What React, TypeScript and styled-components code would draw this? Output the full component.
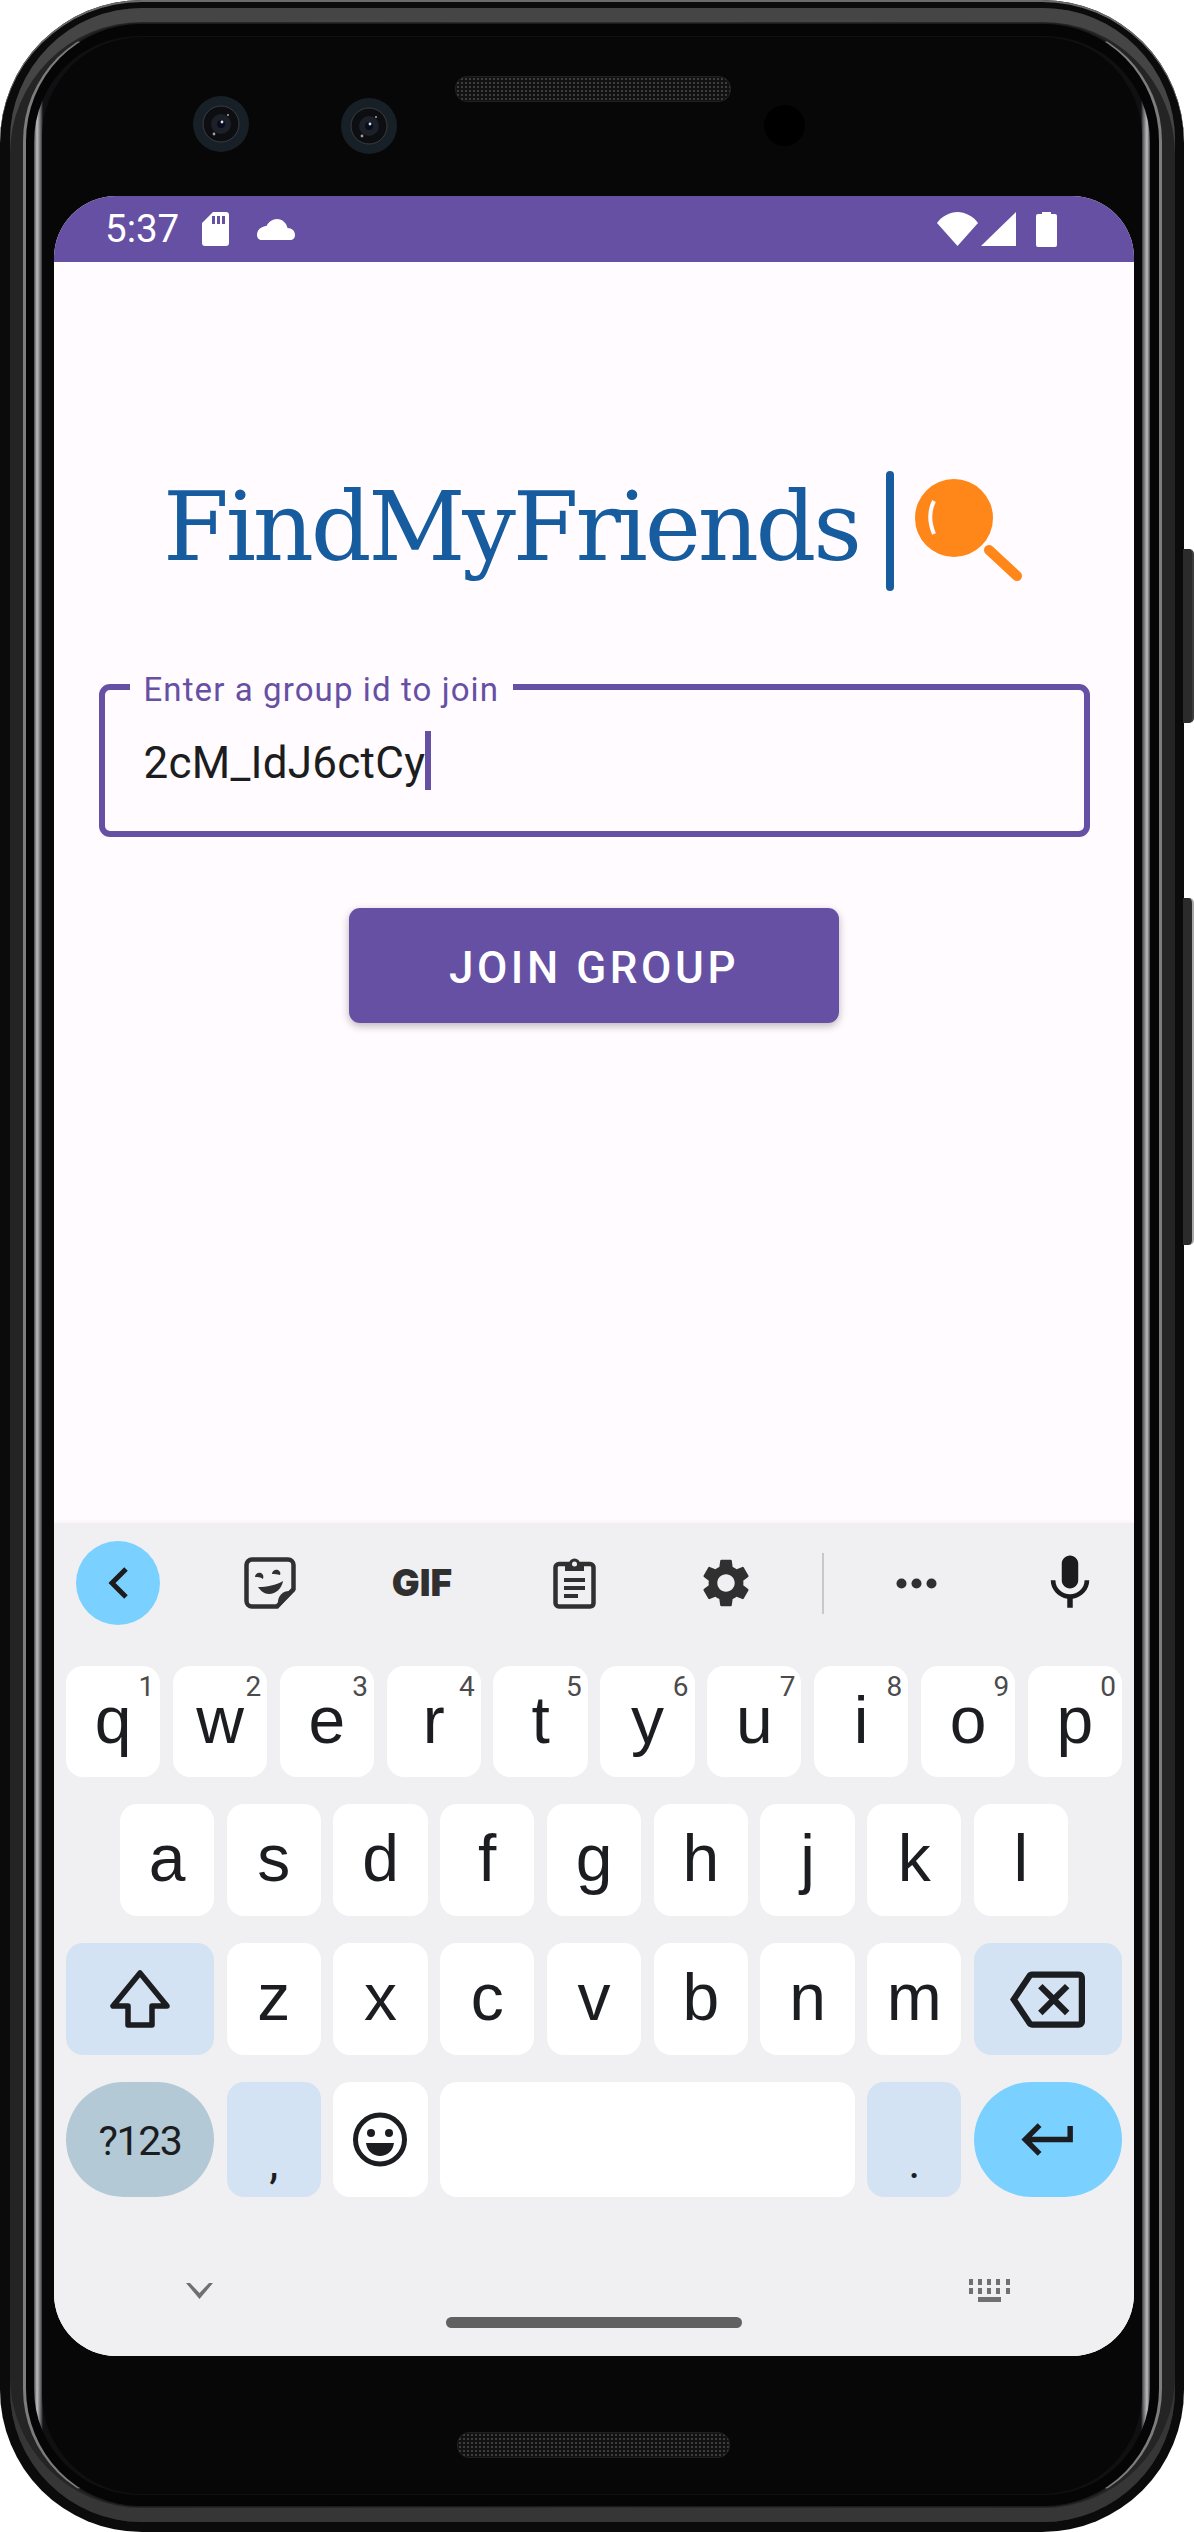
import React from 'react';
import styled, { createGlobalStyle } from 'styled-components';
import { MdKeyboardReturn, MdMic, MdOutlineBackspace, MdSettings } from 'react-icons/md';

const purple = '#6650a4';
const ink = '#1b1d20';
const logoBlue = '#175c9f';

const GlobalStyle = createGlobalStyle`
  html, body {
    margin: 0;
    background: #ffffff;
  }
  * {
    box-sizing: border-box;
  }
`;

const Device = styled.div`
  position: relative;
  width: 1194px;
  height: 2532px;
  font-family: Roboto, 'Liberation Sans', sans-serif;
`;

const SideButton = styled.div<{ $top: number; $height: number; $edge: string }>`
  position: absolute;
  top: ${(p) => p.$top}px;
  right: 0;
  width: 11px;
  height: ${(p) => p.$height}px;
  background: #2b2b2b;
  border-right: 2px solid ${(p) => p.$edge};
  border-radius: 0 5px 5px 0;
`;

const Shell = styled.div`
  width: 1184px;
  height: 100%;
  padding: 8px 9px 10px 10px;
  background: #0b0b0b;
  border-radius: 142px;
  box-shadow: inset 0 2px 0 #6a6a6a;
`;

const Band = styled.div`
  height: 100%;
  padding: 15px 13px;
  background: linear-gradient(90deg, #242424, #2c2c2c 50%, #242424);
  border-radius: 132px;
  box-shadow: inset 0 14px 0 #454545, inset 0 -14px 0 #363636;
`;

const Rim = styled.div`
  height: 100%;
  padding: 12px 9px 11px 8px;
  background: #050505;
  border: 3px solid #7d7d80;
  border-top: 1px solid #1b1b1d;
  border-bottom: 1px solid #1b1b1d;
  border-radius: 118px;
`;

const Glass = styled.div`
  height: 100%;
  padding: 1px 8px;
  background: linear-gradient(
    90deg,
    #48484a 0,
    #bdbdc0 3px,
    #5b5b5e 7px,
    #101012 9px,
    #101012 calc(100% - 9px),
    #5b5b5e calc(100% - 7px),
    #bdbdc0 calc(100% - 3px),
    #48484a 100%
  );
  border-radius: 106px;
`;

const Bezel = styled.div`
  height: 100%;
  padding: 0 8px 0 12px;
  background: #070707;
  border-radius: 100px;
  overflow: hidden;
`;

const TopBezel = styled.div`
  display: flex;
  align-items: flex-start;
  height: 159px;
  padding-left: 139px;
`;

const Lens = styled.svg<{ $top: number; $left: number }>`
  flex: none;
  margin: ${(p) => p.$top}px 0 0 ${(p) => p.$left}px;
`;

const Speaker = styled.div<{ $top: number; $left: number; $width: number }>`
  flex: none;
  width: ${(p) => p.$width}px;
  height: 26px;
  margin: ${(p) => p.$top}px 0 0 ${(p) => p.$left}px;
  background: radial-gradient(circle, #3d3d3d 1px, transparent 1.5px) 0 0 / 4px 4px, #121212;
  border: 1px solid #202020;
  border-radius: 12px;
`;

const Sensor = styled.div`
  flex: none;
  width: 41px;
  height: 41px;
  margin: 68px 0 0 33px;
  background: #000000;
  border-radius: 50%;
`;

const Screen = styled.div`
  display: flex;
  flex-direction: column;
  width: 1080px;
  height: 2160px;
  background: #fffbfe;
  border-radius: 62px;
  overflow: hidden;
`;

const StatusBar = styled.div`
  flex: none;
  display: flex;
  align-items: center;
  height: 66px;
  padding: 0 77px 0 51px;
  background: ${purple};
  color: #ffffff;
`;

const Time = styled.span`
  width: 72px;
  margin-right: 25px;
  font-size: 38.5px;
  line-height: 44px;
`;

const StatusIcon = styled.svg<{ $gap?: number }>`
  flex: none;
  margin-right: ${(p) => p.$gap ?? 0}px;
  fill: #ffffff;
`;

const StatusSpacer = styled.div`
  flex: 1;
`;

const Content = styled.main`
  flex: 1;
  display: flex;
  flex-direction: column;
`;

const LogoRow = styled.div`
  display: flex;
  align-items: center;
  height: 120px;
  margin-top: 209px;
  padding-left: 109px;
`;

const LogoText = styled.div`
  width: 723px;
  margin-top: -9px;
  font-family: 'DejaVu Serif', 'Liberation Serif', serif;
  font-size: 95px;
  line-height: 120px;
  letter-spacing: -3.25px;
  color: ${logoBlue};
  white-space: nowrap;
`;

const LogoBar = styled.div`
  flex: none;
  width: 8px;
  height: 120px;
  background: ${logoBlue};
  border-radius: 4px;
`;

const LogoGlass = styled.svg`
  flex: none;
  margin-left: 21px;
`;

const Field = styled.div`
  position: relative;
  display: flex;
  align-items: flex-start;
  height: 153px;
  margin: 93px 44px 0 44.5px;
  padding: 41px 39px 0;
  border: 6px solid ${purple};
  border-radius: 11px;
`;

const FieldLabel = styled.label`
  position: absolute;
  top: -20px;
  left: 25px;
  padding: 0 14px;
  background: #fffbfe;
  color: ${purple};
  font-size: 33px;
  line-height: 40px;
  letter-spacing: 1.1px;
`;

const FieldValue = styled.span`
  margin-top: 6px;
  color: ${ink};
  font-size: 44px;
  line-height: 52px;
  letter-spacing: 0.25px;
`;

const Caret = styled.span`
  flex: none;
  width: 5.5px;
  height: 59px;
  background: ${purple};
`;

const JoinButton = styled.button`
  align-self: center;
  width: 490px;
  height: 115px;
  margin-top: 71px;
  padding: 4px 0 0;
  background: ${purple};
  border: 0;
  border-radius: 11px;
  box-shadow: 0 3px 8px rgba(0, 0, 0, 0.28);
  color: #ffffff;
  font-family: Roboto, sans-serif;
  font-size: 44px;
  font-weight: 500;
  letter-spacing: 3.6px;
`;

const Keyboard = styled.section`
  flex: none;
  height: 833px;
  padding: 0 12px;
  background: #f0f0f2;
  box-shadow: 0 -2px 3px rgba(0, 0, 0, 0.03);
`;

const Toolbar = styled.div`
  display: flex;
  align-items: center;
  height: 120px;
  margin: 0 -12px 23px;
  padding-left: 22px;
`;

const BackButton = styled.div`
  flex: none;
  display: flex;
  align-items: center;
  justify-content: center;
  width: 84px;
  height: 84px;
  margin-right: 34px;
  background: #7ad0ff;
  border-radius: 50%;
`;

const ToolSlot = styled.div<{ $width: number }>`
  flex: none;
  display: flex;
  align-items: center;
  justify-content: center;
  width: ${(p) => p.$width}px;
  color: #303030;
`;

const GifLabel = styled.span`
  font-family: Inter, 'DejaVu Sans', sans-serif;
  font-size: 37px;
  font-weight: 900;
  line-height: 40px;
  color: #303030;
`;

const ToolDivider = styled.div`
  flex: none;
  width: 2px;
  height: 61px;
  margin-left: 20px;
  background: #c8c8cc;
`;

const KeyRows = styled.div`
  display: flex;
  flex-direction: column;
  gap: 27px;
`;

const KeyRow = styled.div<{ $height: number; $inset?: number }>`
  display: flex;
  gap: 12.6px;
  height: ${(p) => p.$height}px;
  padding: 0 ${(p) => p.$inset ?? 0}px;
`;

const Key = styled.div<{ $width?: number; $bg?: string; $pill?: boolean; $low?: boolean; $icon?: boolean }>`
  position: relative;
  flex: ${(p) => (p.$width ? `0 0 ${p.$width}px` : '1')};
  display: flex;
  align-items: ${(p) => (p.$low ? 'flex-end' : 'center')};
  justify-content: center;
  padding-bottom: ${(p) => (p.$low ? 12 : p.$icon ? 0 : 4)}px;
  background: ${(p) => p.$bg ?? '#ffffff'};
  border-radius: ${(p) => (p.$pill ? '58px' : '17px')};
  color: ${ink};
  font-family: 'Liberation Sans', Roboto, sans-serif;
  font-size: 66px;
  line-height: 76px;
`;

const Hint = styled.sup`
  position: absolute;
  top: 7px;
  right: 6px;
  color: #4b4b4d;
  font-family: Roboto, sans-serif;
  font-size: 28px;
  line-height: 28px;
`;

const ModeLabel = styled.span`
  margin-top: 2px;
  font-family: Roboto, sans-serif;
  font-size: 41px;
  letter-spacing: -1.4px;
  line-height: 48px;
`;

const Punct = styled.span`
  font-family: Roboto, sans-serif;
  font-size: 46px;
  line-height: 46px;
`;

const NavRow = styled.div`
  display: flex;
  align-items: center;
  justify-content: space-between;
  height: 23px;
  margin-top: 82px;
  padding: 0 112px 0 120px;
`;

const NavIcon = styled.svg`
  flex: none;
  fill: #707070;
`;

const HomeBar = styled.div`
  width: 296px;
  height: 11px;
  margin: 15px auto 0;
  background: #616161;
  border-radius: 6px;
`;

const CameraLens = ({ top, left }: { top: number; left: number }) => (
  <Lens $top={top} $left={left} width="56" height="56" viewBox="0 0 56 56">
    <circle cx="28" cy="28" r="28" fill="#182027" />
    <circle cx="28" cy="28" r="18" fill="#0d0e12" stroke="#3a3c40" strokeWidth="1" />
    <circle cx="28" cy="28" r="10" fill="#1c2029" />
    <circle cx="28" cy="28" r="4" fill="#0a0c1c" />
    <circle cx="29" cy="26" r="1.4" fill="#d8e4f0" />
    <circle cx="35" cy="19" r="1" fill="#b8a89c" />
    <circle cx="21" cy="38" r="1.4" fill="#a89c98" />
  </Lens>
);

const row1 = [
  ['q', '1'],
  ['w', '2'],
  ['e', '3'],
  ['r', '4'],
  ['t', '5'],
  ['y', '6'],
  ['u', '7'],
  ['i', '8'],
  ['o', '9'],
  ['p', '0'],
];
const row2 = ['a', 's', 'd', 'f', 'g', 'h', 'j', 'k', 'l'];
const row3 = ['z', 'x', 'c', 'v', 'b', 'n', 'm'];
const keyWidth = 94.2;
const wideKey = 148;
const lightBlue = '#d3e3f3';

export default function App() {
  return (
    <>
      <GlobalStyle />
      <Device>
        <SideButton $top={549} $height={174} $edge="#3c3c3c" />
        <SideButton $top={898} $height={347} $edge="#a8a8a8" />
        <Shell>
          <Band>
            <Rim>
              <Glass>
                <Bezel>
                  <TopBezel>
                    <CameraLens top={59} left={0} />
                    <CameraLens top={61} left={92} />
                    <Speaker $top={39} $left={58} $width={276} />
                    <Sensor />
                  </TopBezel>
                  <Screen>
                    <StatusBar>
                      <Time>5:37</Time>
                      <StatusIcon $gap={28} width="27" height="34" viewBox="0 0 27 34">
                        <path d="M11 0h13a3 3 0 0 1 3 3v28a3 3 0 0 1-3 3H3a3 3 0 0 1-3-3V11zM10 4v8h3V4zm5 0v8h3V4zm5 0v8h3V4z" fillRule="evenodd" />
                      </StatusIcon>
                      <StatusIcon width="38" height="21" viewBox="0 0 38 21">
                        <path d="M30.5 9C29.5 4 25.5 0 20 0c-4.500 0-8.500 3-10.500 7C4 7.500 0 11 0 16c0 3 2 5 5 5h28c3 0 5-2 5-5 0-4-3-7-7.500-7z" />
                      </StatusIcon>
                      <StatusSpacer />
                      <StatusIcon $gap={3} width="41" height="34" viewBox="0 0 41 34">
                        <path d="M0 11C5 4 13 0 20.500 0S36 4 41 11L20.500 34z" />
                      </StatusIcon>
                      <StatusIcon $gap={20} width="35" height="34" viewBox="0 0 35 34">
                        <path d="M35 0v34H0z" />
                      </StatusIcon>
                      <StatusIcon width="21" height="35" viewBox="0 0 21 35">
                        <path d="M6 0h9v2h4a2 2 0 0 1 2 2v29a2 2 0 0 1-2 2H2a2 2 0 0 1-2-2V4a2 2 0 0 1 2-2h4z" />
                      </StatusIcon>
                    </StatusBar>
                    <Content>
                      <LogoRow>
                        <LogoText>FindMyFriends</LogoText>
                        <LogoBar />
                        <LogoGlass width="110" height="104" viewBox="0 0 110 104">
                          <circle cx="39" cy="39" r="39" fill="#ff8618" />
                          <path d="M19 22c-5 10-5 21 0 33" fill="none" stroke="#fffbfe" strokeWidth="4" />
                          <path d="M74 71l28 26" fill="none" stroke="#ff8618" strokeWidth="10" strokeLinecap="round" />
                        </LogoGlass>
                      </LogoRow>
                      <Field>
                        <FieldLabel>Enter a group id to join</FieldLabel>
                        <FieldValue>2cM_IdJ6ctCy</FieldValue>
                        <Caret />
                      </Field>
                      <JoinButton>JOIN GROUP</JoinButton>
                    </Content>
                    <Keyboard>
                      <Toolbar>
                        <BackButton>
                          <svg width="21" height="32" viewBox="0 0 21 32">
                            <path d="M18 2L4 16l14 14" fill="none" stroke="#1c1c1e" strokeWidth="5" />
                          </svg>
                        </BackButton>
                        <ToolSlot $width={152}>
                          <svg width="52" height="52" viewBox="0 0 52 52">
                            <path d="M8 2.500h36a5.500 5.500 0 0 1 5.500 5.500v24L33 49.500H8A5.500 5.500 0 0 1 2.500 44V8A5.500 5.500 0 0 1 8 2.500z" fill="none" stroke="#303030" strokeWidth="4.500" />
                            <path d="M51 34h-6a11 11 0 0 0-11 11v6z" fill="#303030" />
                            <path d="M11 20c0-3 3-5 6-4 2 1 3 3 2 6-3-2-5-2-8-2z" fill="#303030" />
                            <path d="M28 17c0-3 3-5 6-4 2 1 3 3 2 5-3-1-5-1-8-1z" fill="#303030" />
                            <path d="M14 30c9 0 18-2 25-6-1 7-7 13-14 13-5 0-8-3-11-7z" fill="#303030" />
                          </svg>
                        </ToolSlot>
                        <ToolSlot $width={152}>
                          <GifLabel>GIF</GifLabel>
                        </ToolSlot>
                        <ToolSlot $width={152}>
                          <svg width="43" height="52" viewBox="0 0 43 52">
                            <path d="M6 7h31a3.500 3.500 0 0 1 3.500 3.500v36A3.500 3.500 0 0 1 37 49.500H6A3.500 3.500 0 0 1 2.500 46V10.500A3.500 3.500 0 0 1 6 7z" fill="none" stroke="#303030" strokeWidth="4.500" />
                            <path d="M12 7h4a5.500 5.500 0 0 1 11 0h4v7H12z" fill="#303030" />
                            <circle cx="21.500" cy="7" r="2.500" fill="#f0f0f2" />
                            <path d="M11 21h21v4H11zM11 29h21v4H11zM11 37h14v4H11z" fill="#303030" />
                          </svg>
                        </ToolSlot>
                        <ToolSlot $width={152}>
                          <MdSettings size={58} />
                        </ToolSlot>
                        <ToolDivider />
                        <ToolSlot $width={184}>
                          <svg width="41" height="11" viewBox="0 0 41 11">
                            <circle cx="5.500" cy="5.500" r="5" fill="#303030" />
                            <circle cx="20.500" cy="5.500" r="5" fill="#303030" />
                            <circle cx="35.500" cy="5.500" r="5" fill="#303030" />
                          </svg>
                        </ToolSlot>
                        <ToolSlot $width={124}>
                          <MdMic size={66} color="#1c1c1e" />
                        </ToolSlot>
                      </Toolbar>
                      <KeyRows>
                        <KeyRow $height={111}>
                          {row1.map(([letter, hint]) => (
                            <Key key={letter}>
                              {letter}
                              <Hint>{hint}</Hint>
                            </Key>
                          ))}
                        </KeyRow>
                        <KeyRow $height={112} $inset={54}>
                          {row2.map((letter) => (
                            <Key key={letter}>{letter}</Key>
                          ))}
                        </KeyRow>
                        <KeyRow $height={112}>
                          <Key $width={wideKey} $bg={lightBlue} $icon>
                            <svg width="60" height="58" viewBox="0 0 60 58">
                              <path d="M30 3L3 36h15v19h24V36h15z" fill="none" stroke={ink} strokeWidth="5.500" strokeLinejoin="round" />
                            </svg>
                          </Key>
                          {row3.map((letter) => (
                            <Key key={letter}>{letter}</Key>
                          ))}
                          <Key $width={wideKey} $bg={lightBlue} $icon>
                            <MdOutlineBackspace size={75} />
                          </Key>
                        </KeyRow>
                        <KeyRow $height={115}>
                          <Key $width={wideKey} $bg="#b3c9d6" $pill $icon>
                            <ModeLabel>?123</ModeLabel>
                          </Key>
                          <Key $width={keyWidth} $bg={lightBlue} $low>
                            <Punct>,</Punct>
                          </Key>
                          <Key $width={keyWidth} $icon>
                            <svg width="54" height="55" viewBox="0 0 54 55">
                              <circle cx="27" cy="27.500" r="24.500" fill="none" stroke={ink} strokeWidth="5" />
                              <circle cx="18" cy="21" r="4" fill={ink} />
                              <circle cx="36" cy="21" r="4" fill={ink} />
                              <path d="M13 31h28c-1 8-7 13-14 13s-13-5-14-13z" fill={ink} />
                            </svg>
                          </Key>
                          <Key />
                          <Key $width={keyWidth} $bg={lightBlue} $low>
                            <Punct>.</Punct>
                          </Key>
                          <Key $width={wideKey} $bg="#7ad0ff" $pill $icon>
                            <MdKeyboardReturn size={65} />
                          </Key>
                        </KeyRow>
                      </KeyRows>
                      <NavRow>
                        <NavIcon width="27" height="16" viewBox="0 0 27 16">
                          <path d="M0 0l4 0 9.500 10L23 0h4L13.500 16z" />
                        </NavIcon>
                        <NavIcon width="41" height="23" viewBox="0 0 41 23">
                          <path d="M0 0h4v6H0zM9 0h4v6H9zM18 0h4v6h-4zM27 0h4v6h-4zM37 0h4v6h-4zM0 9h4v6H0zM9 9h4v6H9zM18 9h4v6h-4zM27 9h4v6h-4zM37 9h4v6h-4zM9 18h23v5H9z" />
                        </NavIcon>
                      </NavRow>
                      <HomeBar />
                    </Keyboard>
                  </Screen>
                  <Speaker $top={76} $left={403} $width={273} />
                </Bezel>
              </Glass>
            </Rim>
          </Band>
        </Shell>
      </Device>
    </>
  );
}
